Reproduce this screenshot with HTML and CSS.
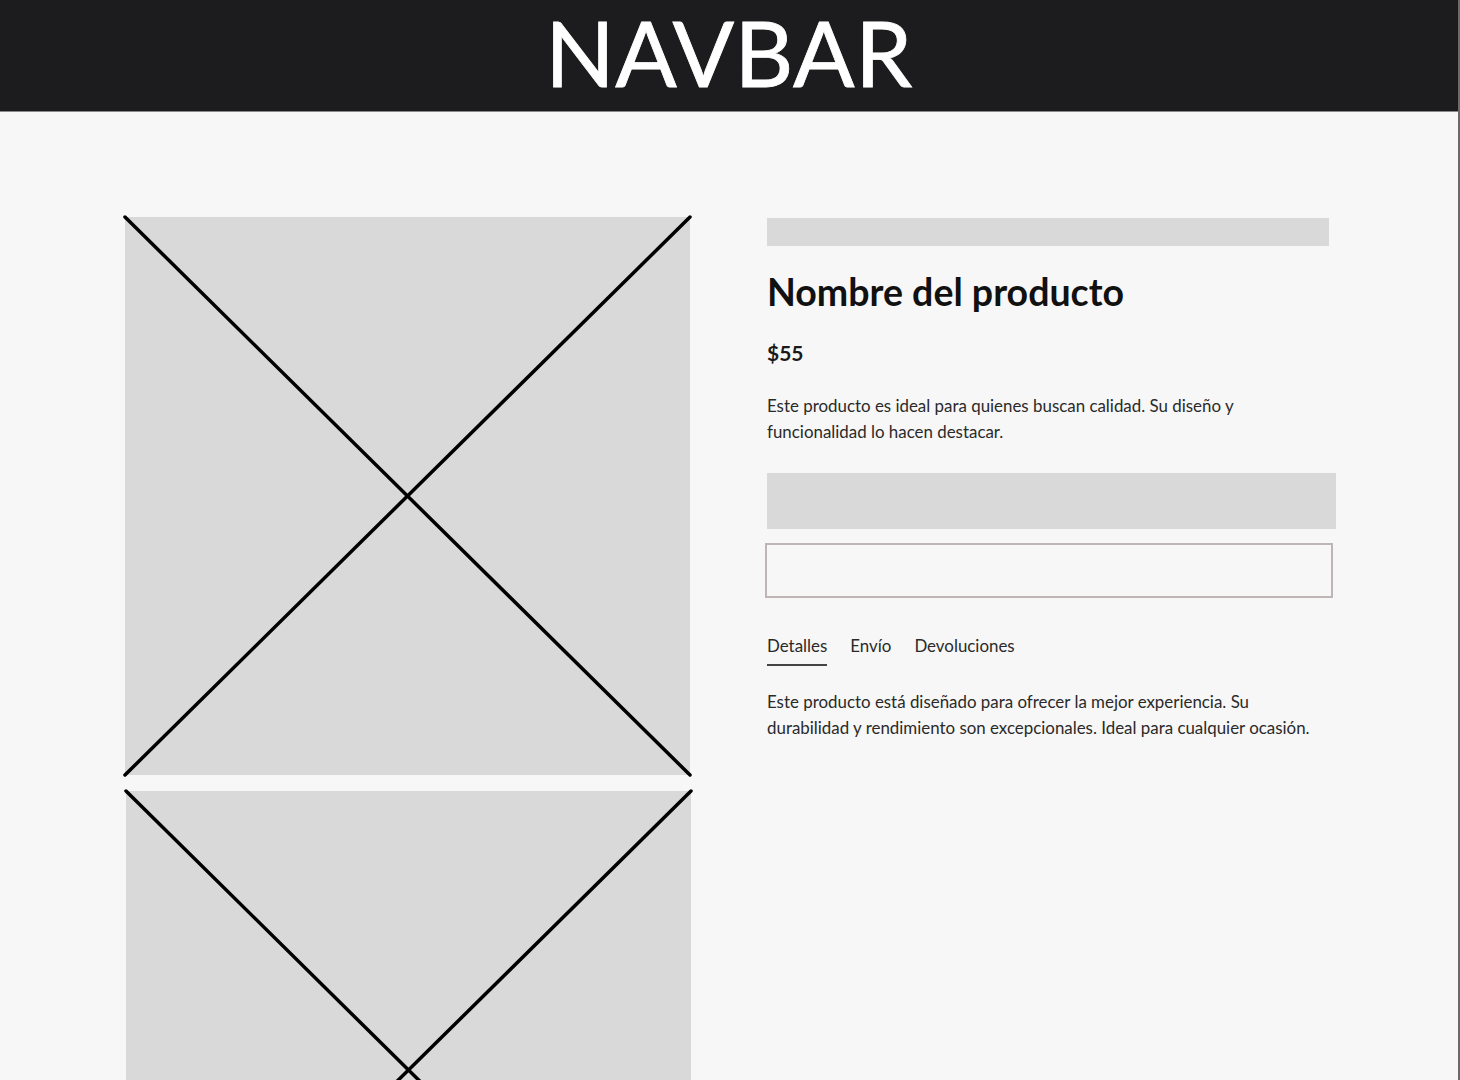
FILE: index.html
```html
<!DOCTYPE html>
<html lang="es">
<head>
<meta charset="utf-8">
<title>Producto</title>
<link rel="stylesheet" href="styles.css">
</head>
<body>
<header class="navbar"><span class="navbar-title">NAVBAR</span></header>
<main class="product">
  <section class="gallery">
    <div class="placeholder">
      <svg viewBox="0 0 565 558" preserveAspectRatio="none"><line x1="0" y1="0" x2="565" y2="558"/><line x1="565" y1="0" x2="0" y2="558"/></svg>
    </div>
    <div class="placeholder second">
      <svg viewBox="0 0 565 558" preserveAspectRatio="none"><line x1="0" y1="0" x2="565" y2="558"/><line x1="565" y1="0" x2="0" y2="558"/></svg>
    </div>
  </section>
  <section class="info">
    <div class="bar-top"></div>
    <h1 class="title">Nombre del producto</h1>
    <div class="price">$55</div>
    <p class="desc">Este producto es ideal para quienes buscan calidad. Su diseño y funcionalidad lo hacen destacar.</p>
    <div class="block-gray"></div>
    <div class="block-outline"></div>
    <nav class="tabs">
      <span class="tab active">Detalles</span>
      <span class="tab">Envío</span>
      <span class="tab">Devoluciones</span>
    </nav>
    <p class="tab-text">Este producto está diseñado para ofrecer la mejor experiencia. Su durabilidad y rendimiento son excepcionales. Ideal para cualquier ocasión.</p>
  </section>
</main>
</body>
</html>
```

FILE: styles.css
```css
html, body {
  margin: 0;
  padding: 0;
}
body {
  background: #f7f7f7;
  font-family: Lato, "Liberation Sans", sans-serif;
  color: #1a1a1a;
  height: 1080px;
  overflow: hidden;
  border-right: 2px solid #6a6a6a;
  box-sizing: border-box;
}
.navbar {
  box-sizing: border-box;
  height: 112px;
  padding-bottom: 9px;
  background: #1c1c1e;
  border-bottom: 1px solid #8a8a8a;
  display: flex;
  justify-content: center;
  align-items: center;
}
.navbar-title {
  color: #ffffff;
  font-size: 91px;
  font-weight: 400;
  line-height: 91px;
  letter-spacing: 0.5px;
  -webkit-text-stroke: 0.8px #ffffff;
}
.product {
  display: flex;
  padding: 105px 0 0 125px;
  gap: 76px;
}
.gallery {
  width: 566px;
  display: flex;
  flex-direction: column;
  gap: 16px;
}
.placeholder {
  width: 565px;
  height: 558px;
  background: #d9d9d9;
}
.placeholder.second {
  margin-left: 1px;
}
.placeholder svg {
  display: block;
  width: 100%;
  height: 100%;
  overflow: visible;
}
.placeholder line {
  stroke: #000;
  stroke-width: 3.5;
  stroke-linecap: round;
}
.info {
  width: 572px;
  padding-top: 1px;
}
.bar-top {
  width: 562px;
  height: 28px;
  background: #d9d9d9;
}
.title {
  margin: 24px 0 0;
  font-size: 37.5px;
  font-weight: 700;
  line-height: 44px;
  color: #111;
}
.price {
  margin-top: 25px;
  font-size: 21px;
  font-weight: 700;
  line-height: 28px;
  color: #1a1a1a;
}
.desc {
  margin: 26px 0 0;
  width: 520px;
  font-size: 16.9px;
  line-height: 26px;
  color: #2a2a2a;
}
.block-gray {
  margin-top: 28px;
  width: 569px;
  height: 56px;
  background: #d9d9d9;
}
.block-outline {
  margin: 14px 0 0 -2px;
  width: 564px;
  height: 51px;
  border: 2px solid #bfb5b5;
  background: #f7f7f7;
}
.tabs {
  margin-top: 37px;
  display: flex;
  gap: 23px;
}
.tab {
  font-size: 16.9px;
  line-height: 22px;
  color: #2a2a2a;
  padding-bottom: 7px;
}
.tab.active {
  border-bottom: 2px solid #444;
}
.tab-text {
  margin: 23px 0 0;
  width: 560px;
  font-size: 16.9px;
  line-height: 26px;
  color: #2a2a2a;
}
```
